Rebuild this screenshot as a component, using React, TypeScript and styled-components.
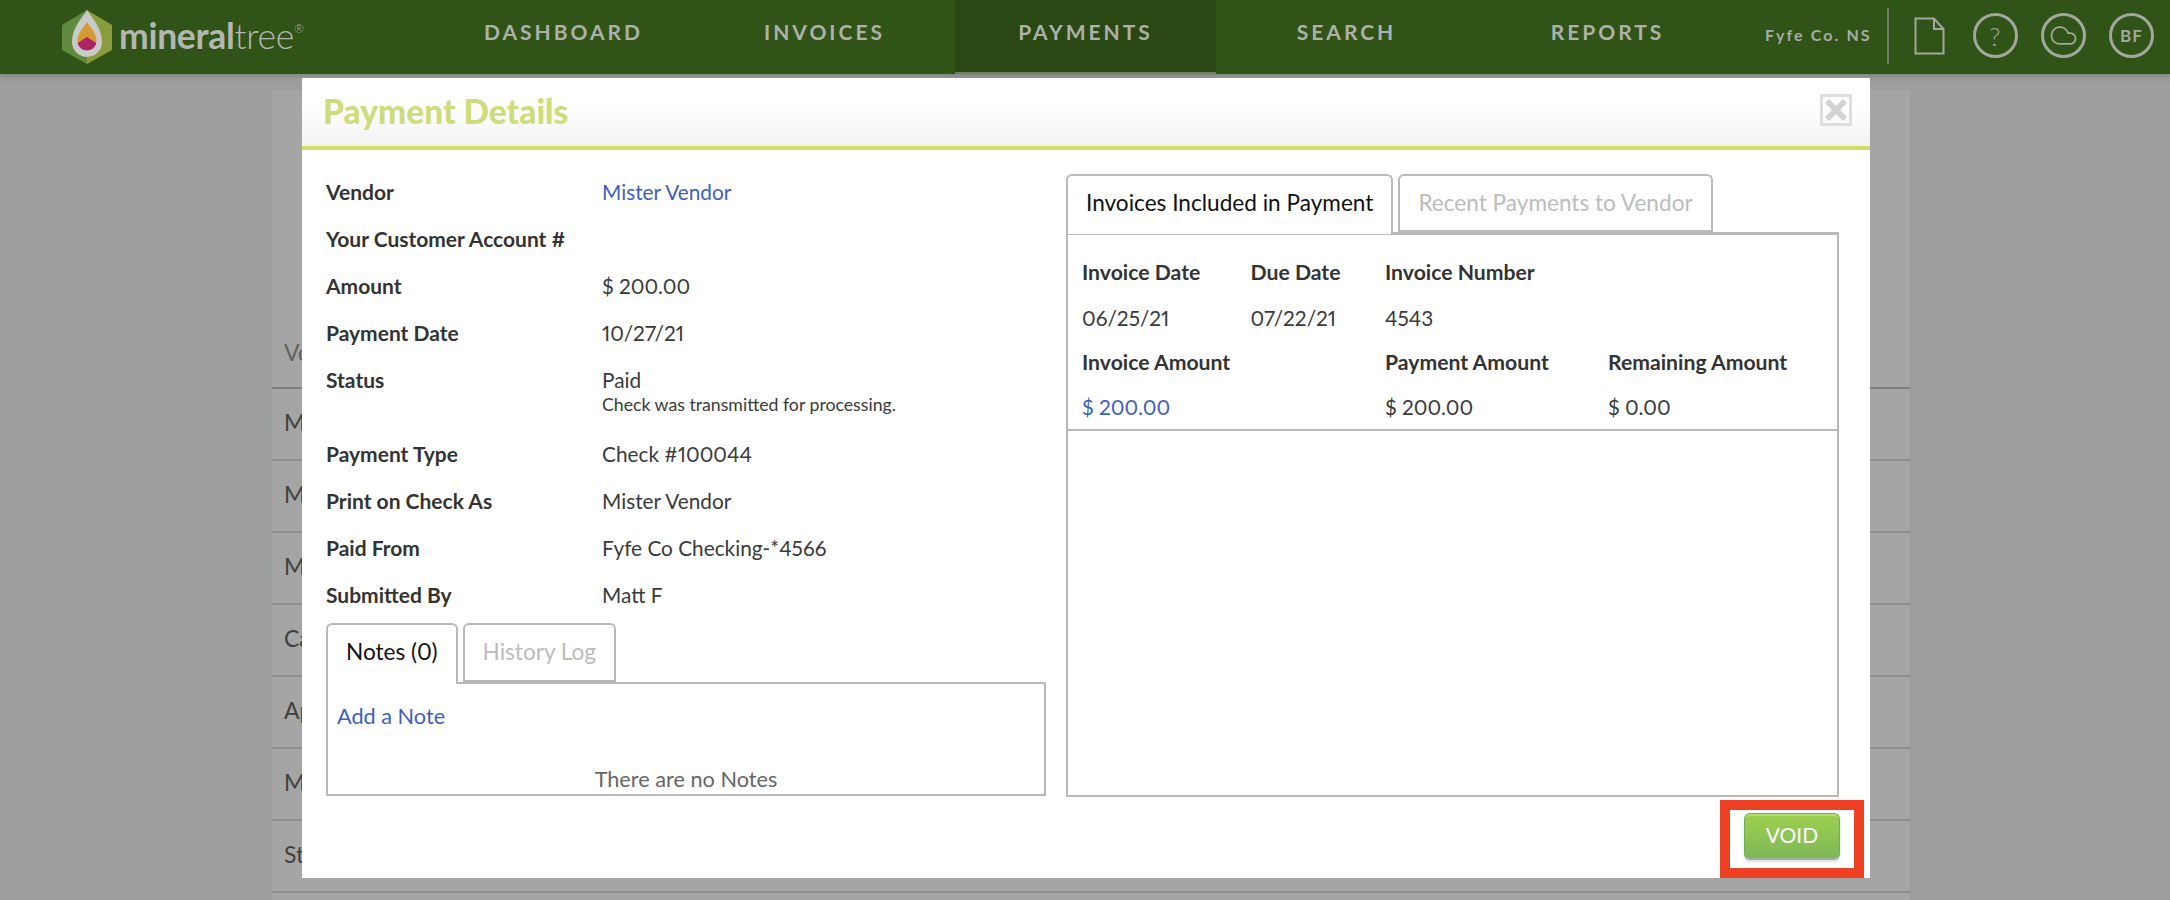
import { FC } from "react";
import styled, { createGlobalStyle } from "styled-components";
import { Cloud } from "lucide-react";

const NAV_ITEMS = ["DASHBOARD", "INVOICES", "PAYMENTS", "SEARCH", "REPORTS"];
// only the first letters of the list behind the modal can be seen
const BACK_ROWS = ["M", "M", "M", "Ca", "Ap", "M", "St"];

const DETAILS: { label: string; value?: string; link?: boolean; note?: string }[] = [
  { label: "Vendor", value: "Mister Vendor", link: true },
  { label: "Your Customer Account #" },
  { label: "Amount", value: "$ 200.00" },
  { label: "Payment Date", value: "10/27/21" },
  { label: "Status", value: "Paid", note: "Check was transmitted for processing." },
  { label: "Payment Type", value: "Check #100044" },
  { label: "Print on Check As", value: "Mister Vendor" },
  { label: "Paid From", value: "Fyfe Co Checking-*4566" },
  { label: "Submitted By", value: "Matt F" },
];

const Logo: FC = () => (
  <LogoWrap>
    <svg width="50" height="54" viewBox="0 0 50 54">
      <polygon points="25,0 0,15 0,40 25,54" fill="#5f8b3f" />
      <polygon points="25,0 50,15 50,40 25,54" fill="#8b9c3c" />
      <path d="M25 0 C21 7 10 17 10 32 A15 15 0 0 0 40 32 C40 17 29 7 25 0 Z" fill="#c9c9c9" />
      <path d="M25 12 C22 17 15.500 23 15.500 30.500 A9.500 9.500 0 0 0 34.500 30.500 C34.500 23 28 17 25 12 Z" fill="#d69a35" />
      <path d="M25 27 L34.300 33 A9.500 9.500 0 0 1 15.700 33 Z" fill="#ad2463" />
    </svg>
    <LogoText>
      <b>mineral</b>tree<sup>®</sup>
    </LogoText>
  </LogoWrap>
);

const FileIcon: FC = () => (
  <svg width="31" height="38" viewBox="0 0 31 38" fill="none" stroke="#a3a7a0" strokeWidth="2">
    <path d="M1.500 1.500 H20 L29.500 12 V36.500 H1.500 Z" />
    <path d="M20 1.500 V12 H29.500" />
  </svg>
);

const CloseIcon: FC = () => (
  <svg width="24" height="24" viewBox="0 0 24 24" stroke="#d2d2d2" strokeWidth="6">
    <path d="M3 3 L21 21 M21 3 L3 21" />
  </svg>
);

const App: FC = () => {
  return (
    <>
      <GlobalStyle />
      <Page>
        <Nav>
          <Logo />
          <NavList>
            {NAV_ITEMS.map((item) => (
              <NavItem key={item} $active={item === "PAYMENTS"}>
                {item}
              </NavItem>
            ))}
          </NavList>
          <NavRight>
            <Company>Fyfe Co. NS</Company>
            <NavDivider />
            <FileSlot>
              <FileIcon />
            </FileSlot>
            <RoundIcon $weight={300}>?</RoundIcon>
            <RoundIcon>
              <Cloud size={29} strokeWidth={1.4} />
            </RoundIcon>
            <RoundIcon $weight={700} $size={17}>
              BF
            </RoundIcon>
          </NavRight>
        </Nav>

        <BackPanel>
          <BackHead>
            <BackCell>Ve</BackCell>
          </BackHead>
          {BACK_ROWS.map((row, i) => (
            <BackRow key={i}>
              <BackCell>{row}</BackCell>
            </BackRow>
          ))}
        </BackPanel>

        <Modal>
          <ModalHeader>
            <ModalTitle>Payment Details</ModalTitle>
            <CloseBox>
              <CloseIcon />
            </CloseBox>
          </ModalHeader>
          <ModalBody>
            <LeftColumn>
              <DetailList>
                {DETAILS.map((d) => (
                  <DetailRow key={d.label} $tall={!!d.note}>
                    <DetailLabel>{d.label}</DetailLabel>
                    <div>
                      {d.link ? <LinkText>{d.value}</LinkText> : d.value}
                      {d.note && <DetailNote>{d.note}</DetailNote>}
                    </div>
                  </DetailRow>
                ))}
              </DetailList>
              <Tabs $height={59}>
                <Tab $active $height={59}>Notes (0)</Tab>
                <Tab $height={59}>History Log</Tab>
              </Tabs>
              <NotesPanel>
                <LinkText>Add a Note</LinkText>
                <EmptyNotes>There are no Notes</EmptyNotes>
              </NotesPanel>
            </LeftColumn>

            <RightColumn>
              <Tabs $height={58}>
                <Tab $active $height={58}>Invoices Included in Payment</Tab>
                <Tab $height={58}>Recent Payments to Vendor</Tab>
              </Tabs>
              <InvoicePanel>
                <InvoiceGrid>
                  <HeadCell>Invoice Date</HeadCell>
                  <HeadCell>Due Date</HeadCell>
                  <HeadCell>Invoice Number</HeadCell>
                  <span />
                  <span>06/25/21</span>
                  <span>07/22/21</span>
                  <span>4543</span>
                  <span />
                  <HeadCell $wide>Invoice Amount</HeadCell>
                  <HeadCell>Payment Amount</HeadCell>
                  <HeadCell>Remaining Amount</HeadCell>
                  <WideCell>
                    <LinkText>$ 200.00</LinkText>
                  </WideCell>
                  <span>$ 200.00</span>
                  <span>$ 0.00</span>
                </InvoiceGrid>
              </InvoicePanel>
            </RightColumn>
          </ModalBody>
          <VoidHighlight>
            <VoidButton>VOID</VoidButton>
          </VoidHighlight>
        </Modal>
      </Page>
    </>
  );
};

export default App;

const GlobalStyle = createGlobalStyle`
  html, body {
    margin: 0;
    padding: 0;
    height: 900px;
    overflow: hidden;
  }
  body {
    font-family: "Lato", "Liberation Sans", sans-serif;
    font-variant-numeric: proportional-nums;
    background: #9c9e9d;
  }
`;

const Page = styled.div`
  position: relative;
  width: 2170px;
  height: 900px;
  overflow: hidden;
  background: #9c9e9d;
`;

const Nav = styled.header`
  position: relative;
  display: flex;
  align-items: stretch;
  height: 74px;
  background: #305417;
  box-shadow: 0 2px 6px rgba(0, 0, 0, 0.2);
`;

const LogoWrap = styled.div`
  display: flex;
  align-items: flex-start;
  gap: 7px;
  padding: 10px 0 0 62px;
  flex: none;
  width: 371px;
`;

const LogoText = styled.div`
  margin-top: 6px;
  font-size: 35.500px;
  line-height: 40px;
  color: #b4b6b2;
  letter-spacing: -0.3px;
  font-weight: 300;

  b {
    font-weight: 700;
  }
  sup {
    font-size: 12px;
    line-height: 0;
    vertical-align: 16px;
  }
`;

const NavList = styled.nav`
  display: flex;
  flex: none;
`;

const NavItem = styled.div<{ $active?: boolean }>`
  display: flex;
  align-items: center;
  justify-content: center;
  box-sizing: border-box;
  width: 261px;
  height: 74px;
  padding-bottom: 9px;
  font-size: 21px;
  font-weight: 700;
  letter-spacing: 3px;
  color: #aeb0ab;
  background: ${(props) => (props.$active ? "#2a4814" : "transparent")};
  border-bottom: 2px solid ${(props) => (props.$active ? "#6f7f63" : "transparent")};
`;

const NavRight = styled.div`
  display: flex;
  align-items: center;
  flex: 1;
  padding: 0 0 3px 27px;
`;

const Company = styled.div`
  font-size: 16px;
  font-weight: 700;
  letter-spacing: 2.1px;
  color: #a9aca6;
  white-space: nowrap;
  width: 122px;
  margin-bottom: 2px;
`;

const NavDivider = styled.div`
  width: 2px;
  height: 56px;
  background: #6f7f63;
  flex: none;
`;

const FileSlot = styled.div`
  display: flex;
  margin: 0 28px 0 25px;
`;

const RoundIcon = styled.div<{ $weight?: number; $size?: number }>`
  display: flex;
  align-items: center;
  justify-content: center;
  box-sizing: border-box;
  flex: none;
  width: 45px;
  height: 45px;
  margin-right: 23px;
  border: 3px solid #a3a7a0;
  border-radius: 50%;
  color: #a3a7a0;
  font-size: ${(props) => props.$size ?? 25}px;
  font-weight: ${(props) => props.$weight ?? 400};
  letter-spacing: 1px;
`;

const BackPanel = styled.section`
  box-sizing: border-box;
  width: 1638px;
  height: 826px;
  margin: 16px 0 0 272px;
  padding-top: 248px;
  background: #a5a5a5;
  font-size: 23px;
  color: #3f403f;
`;

const BackHead = styled.div`
  display: flex;
  align-items: center;
  height: 51px;
  padding: 0 0 22px 12px;
  box-sizing: border-box;
  color: #626362;
  border-bottom: 2px solid #7f807f;
`;

const BackRow = styled.div`
  display: flex;
  align-items: center;
  box-sizing: border-box;
  height: 72px;
  padding: 0 0 4px 12px;
  border-bottom: 2px solid #8f908f;
`;

const BackCell = styled.div`
  width: 18px;
  overflow: hidden;
  white-space: nowrap;
`;

const Modal = styled.div`
  position: absolute;
  left: 302px;
  top: 78px;
  width: 1568px;
  height: 800px;
  overflow: hidden;
  background: #fff;
  color: #3a3a3a;
  font-size: 20.800px;
`;

const ModalHeader = styled.div`
  position: relative;
  display: flex;
  align-items: center;
  box-sizing: border-box;
  height: 72px;
  padding: 0 0 2px 21px;
  background: linear-gradient(#fff 40%, #f2f2f2);
  border-bottom: 4px solid #d3dd63;
`;

const ModalTitle = styled.h2`
  margin: 0;
  font-size: 33.500px;
  font-weight: 900;
  color: #cfdc7b;
`;

const CloseBox = styled.div`
  position: absolute;
  right: 18px;
  top: 16px;
  display: flex;
  align-items: center;
  justify-content: center;
  box-sizing: border-box;
  width: 32px;
  height: 32px;
  border: 3px solid #dedede;
`;

const ModalBody = styled.div`
  display: flex;
  gap: 20px;
  padding: 19px 31px 0 24px;
`;

const LeftColumn = styled.div`
  width: 720px;
  flex: none;
`;

const RightColumn = styled.div`
  width: 773px;
  flex: none;
  margin-top: 5px;
`;

const DetailList = styled.div`
  margin-bottom: 4px;
`;

const DetailRow = styled.div<{ $tall?: boolean }>`
  display: grid;
  grid-template-columns: 276px 1fr;
  height: ${(props) => (props.$tall ? 74 : 47)}px;
  line-height: 46px;
`;

const DetailLabel = styled.div`
  font-size: 21px;
  font-weight: 700;
  color: #333;
`;

const DetailNote = styled.div`
  margin-top: -10px;
  font-size: 17.700px;
  line-height: 24px;
`;

const LinkText = styled.span`
  color: #3d5ec2;
`;

const Tabs = styled.div<{ $height: number }>`
  display: flex;
  gap: 5px;
  height: ${(props) => props.$height}px;
`;

const Tab = styled.div<{ $active?: boolean; $height: number }>`
  position: relative;
  z-index: ${(props) => (props.$active ? 1 : 0)};
  box-sizing: border-box;
  height: ${(props) => props.$height + (props.$active ? 2 : 0)}px;
  padding: 0 18px;
  font-size: 22.600px;
  line-height: ${(props) => props.$height - 5}px;
  background: #fff;
  border: 2px solid #b9b9b9;
  border-bottom: ${(props) => (props.$active ? "none" : "2px solid #b9b9b9")};
  border-radius: 6px 6px 0 0;
  color: ${(props) => (props.$active ? "#111" : "#bcbcbc")};
  white-space: nowrap;
`;

const NotesPanel = styled.div`
  box-sizing: border-box;
  height: 114px;
  padding: 18px 9px 0;
  border: 2px solid #b9b9b9;
  font-size: 21.700px;
  line-height: 28px;
  overflow: hidden;
`;

const EmptyNotes = styled.div`
  margin-top: 35px;
  text-align: center;
  color: #666;
`;

const InvoicePanel = styled.div`
  box-sizing: border-box;
  height: 565px;
  padding-top: 14px;
  border: 2px solid #b9b9b9;
  border-top-width: 3px;
`;

const InvoiceGrid = styled.div`
  display: grid;
  grid-template-columns: 168.500px 134.500px 223px 1fr;
  grid-template-rows: 46px 45px 44px 45px;
  align-items: center;
  padding: 0 0 0 14px;
  border-bottom: 2px solid #b9b9b9;
`;

const HeadCell = styled.span<{ $wide?: boolean }>`
  font-size: 21.200px;
  font-weight: 700;
  color: #333;
  grid-column: ${(props) => (props.$wide ? "span 2" : "auto")};
`;

const WideCell = styled.span`
  grid-column: span 2;
`;

const VoidHighlight = styled.div`
  position: absolute;
  left: 1418px;
  top: 722px;
  display: flex;
  align-items: flex-start;
  justify-content: center;
  box-sizing: border-box;
  width: 144px;
  height: 78px;
  padding-top: 3px;
  border: 10px solid #ee4023;
`;

const VoidButton = styled.button`
  width: 96px;
  height: 47px;
  padding: 0 0 3px;
  font-family: inherit;
  font-size: 21px;
  font-weight: 400;
  color: #fff;
  background: linear-gradient(#9dd04e, #7fb858);
  border: 1px solid #7aa84f;
  border-bottom: 2px solid #a3ad9c;
  border-radius: 6px;
  box-shadow: inset 0 2px 0 #b4dc6e, 0 2px 3px rgba(0, 0, 0, 0.15);
`;
